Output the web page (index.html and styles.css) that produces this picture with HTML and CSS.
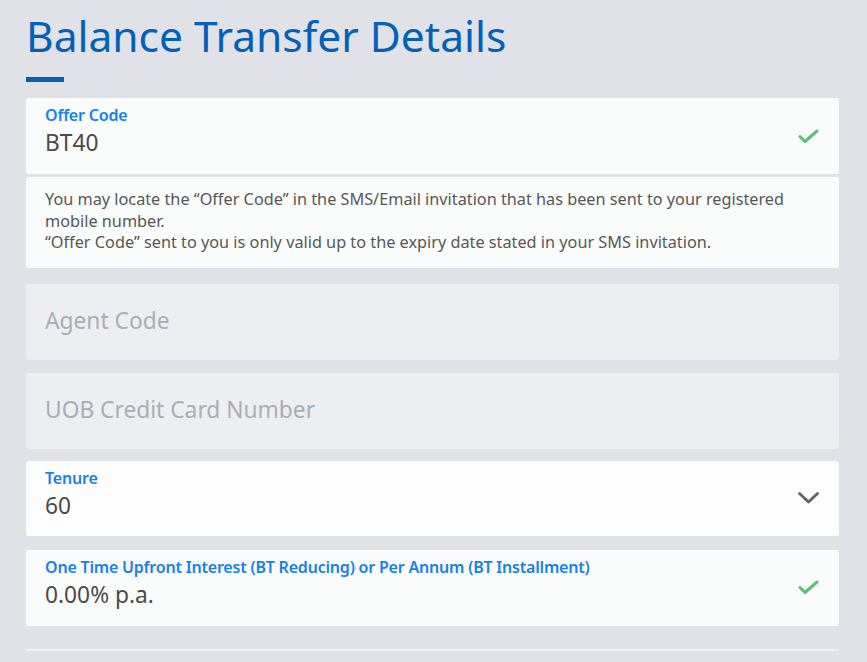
FILE: index.html
```html
<!DOCTYPE html>
<html lang="en">
<head>
<meta charset="utf-8">
<title>Balance Transfer Details</title>
<link rel="stylesheet" href="styles.css">
</head>
<body>
<main class="page">
  <h1 class="title">Balance Transfer Details</h1>
  <div class="title-bar"></div>

  <section class="form">
    <div class="group group-first">
      <div class="field">
        <div class="field-body">
          <div class="label">Offer Code</div>
          <div class="value">BT40</div>
        </div>
        <svg class="icon-check" width="21" height="15" viewBox="0 0 21 15"><path d="M2 7.5 L7 12.5 L19 2" fill="none" stroke="#5cbf74" stroke-width="3" stroke-linecap="round" stroke-linejoin="round"/></svg>
      </div>
      <div class="info">
        <p>You may locate the “Offer Code” in the SMS/Email invitation that has been sent to your registered mobile number.</p>
        <p>“Offer Code” sent to you is only valid up to the expiry date stated in your SMS invitation.</p>
      </div>
    </div>

    <div class="field field-disabled">
      <div class="placeholder">Agent Code</div>
    </div>

    <div class="field field-disabled">
      <div class="placeholder">UOB Credit Card Number</div>
    </div>

    <div class="field field-select">
      <div class="field-body">
        <div class="label">Tenure</div>
        <div class="value">60</div>
      </div>
      <svg class="icon-chevron" width="23" height="14" viewBox="0 0 23 14"><path d="M2.5 2.5 L11.5 11 L20.5 2.5" fill="none" stroke="#666666" stroke-width="3" stroke-linecap="round" stroke-linejoin="round"/></svg>
    </div>

    <div class="field field-last">
      <div class="field-body">
        <div class="label">One Time Upfront Interest (BT Reducing) or Per Annum (BT Installment)</div>
        <div class="value">0.00% p.a.</div>
      </div>
      <svg class="icon-check" width="21" height="15" viewBox="0 0 21 15"><path d="M2 7.5 L7 12.5 L19 2" fill="none" stroke="#5cbf74" stroke-width="3" stroke-linecap="round" stroke-linejoin="round"/></svg>
    </div>

    <div class="divider"></div>
  </section>
</main>
</body>
</html>
```

FILE: styles.css
```css
* { box-sizing: border-box; }

html, body {
  margin: 0;
  padding: 0;
  background: #e1e2e7;
}

body {
  font-family: "Noto Sans", "Open Sans", "DejaVu Sans", sans-serif;
  color: #4a4a4a;
}

.page {
  padding: 9px 28px 0 26px;
}

.title {
  margin: 0;
  font-size: 42.5px;
  line-height: 53px;
  font-weight: 400;
  color: #0061bb;
  letter-spacing: 0;
}

.title-bar {
  width: 38px;
  height: 5px;
  background: #0061bb;
  margin-top: 15px;
}

.form {
  margin-top: 16px;
  display: flex;
  flex-direction: column;
  gap: 13px;
}

.group {
  display: flex;
  flex-direction: column;
  gap: 3px;
}

.group-first {
  margin-bottom: 3px;
}

.field {
  height: 76px;
  background: #fafbfb;
  border-radius: 3px;
  padding: 0 20px 0 19px;
  display: flex;
  align-items: center;
  justify-content: space-between;
}

.field-body {
  display: flex;
  flex-direction: column;
  align-self: flex-start;
  padding-top: 7px;
}

.label {
  font-size: 16px;
  line-height: 20px;
  font-weight: 600;
  letter-spacing: -0.2px;
  color: #1580ee;
}

.value {
  margin-top: 5px;
  font-size: 22.75px;
  line-height: 26px;
  color: #4a4a4a;
}

.field-disabled {
  background: #edeef1;
}

.placeholder {
  font-size: 22.75px;
  line-height: 26px;
  margin-top: -2px;
  color: #a9aeb4;
}

.field-select {
  background: #fdfdfd;
  height: 75px;
  margin-top: -1px;
  margin-bottom: 1px;
  padding-right: 19px;
}

.field-last {
  margin-bottom: 10px;
}

.icon-check,
.icon-chevron {
  flex: none;
  display: block;
}

.info {
  background: #fafbfb;
  border-radius: 3px;
  padding: 12px 18px 14px 19px;
  font-size: 16.25px;
  line-height: 21.5px;
  color: #575757;
}

.info p {
  margin: 0;
}

.divider {
  height: 2px;
  background: #eef0f2;
}
```
